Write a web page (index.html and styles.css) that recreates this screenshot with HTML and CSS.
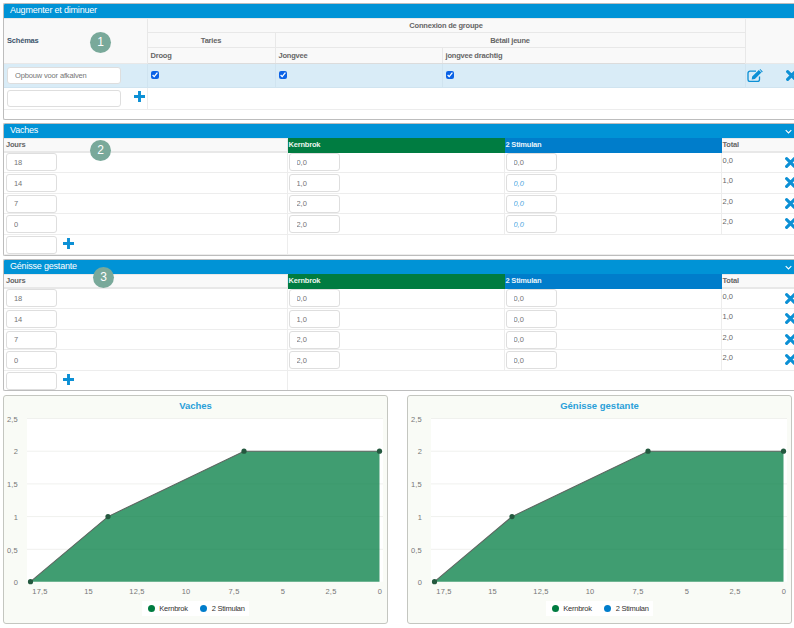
FILE: index.html
```html
<!DOCTYPE html>
<html lang="fr">
<head>
<meta charset="utf-8">
<title>Augmenter et diminuer</title>
<link rel="stylesheet" href="styles.css">
</head>
<body>
<svg class="defs" width="0" height="0" aria-hidden="true">
  <symbol id="i-plus" viewBox="0 0 12 12"><path d="M4.4 0h3.2v4.4H12v3.2H7.6V12H4.4V7.6H0V4.4h4.4z"/></symbol>
  <symbol id="i-x" viewBox="0 0 12 12"><path d="M1.8 1.8l8.4 8.4M10.2 1.8l-8.4 8.4" fill="none" stroke="currentColor" stroke-width="3.4" stroke-linecap="round"/></symbol>
  <symbol id="i-edit" viewBox="0 0 16 13"><path d="M9 2.2H3a2 2 0 0 0-2 2v6.3a2 2 0 0 0 2 2h7.5a2 2 0 0 0 2-2V7.6" fill="none" stroke="currentColor" stroke-width="1.3"/><path d="M5.2 7.4L11.8.9l2.6 2.6-6.5 6.5-3.2.6zM12.6.2l.6-.2 2.6 2.6-.9 1z"/></symbol>
</svg>

<section class="panel panel-schema">
  <h2 class="panel-head">Augmenter et diminuer</h2>
  <span class="badge badge-1">1</span>
  <table class="grid">
    <colgroup><col class="c-s1"><col class="c-s2"><col class="c-s3"><col class="c-s4"><col class="c-s5"></colgroup>
    <thead>
      <tr class="h-a">
        <th rowspan="3" class="th-schema">Schémas</th>
        <th colspan="3" class="center">Connexion de groupe</th>
        <th rowspan="3"></th>
      </tr>
      <tr class="h-b">
        <th class="center">Taries</th>
        <th colspan="2" class="center">Bétail jeune</th>
      </tr>
      <tr class="h-c">
        <th>Droog</th>
        <th>Jongvee</th>
        <th>jongvee drachtig</th>
      </tr>
    </thead>
    <tbody>
      <tr class="row-active">
        <td><input class="field field-wide" type="text" value="Opbouw voor afkalven"></td>
        <td><input class="check" type="checkbox" checked></td>
        <td><input class="check" type="checkbox" checked></td>
        <td><input class="check" type="checkbox" checked></td>
        <td class="actions"><svg class="ic ic-edit"><use href="#i-edit"/></svg><svg class="ic ic-x"><use href="#i-x"/></svg></td>
      </tr>
      <tr class="row-add">
        <td><input class="field field-wide" type="text"><svg class="ic ic-plus ic-plus-s"><use href="#i-plus"/></svg></td>
        <td colspan="4" class="no-inner"></td>
      </tr>
    </tbody>
  </table>
  <div class="panel-foot"></div>
</section>

<section class="panel panel-data panel-2">
  <h2 class="panel-head">Vaches<svg class="chev" viewBox="0 0 10 6"><path d="M1 1l4 4 4-4"/></svg></h2>
  <span class="badge badge-2">2</span>
  <table class="grid">
    <colgroup><col class="c-d1"><col class="c-d2"><col class="c-d3"><col class="c-d4"></colgroup>
    <thead>
      <tr><th>Jours</th><th class="th-green">Kernbrok</th><th class="th-blue">2 Stimulan</th><th>Total</th></tr>
    </thead>
    <tbody>
      <tr><td><input class="field" value="18"></td><td class="cell-n"><input class="field" value="0,0"></td><td class="cell-n"><input class="field" value="0,0"></td><td class="total">0,0<svg class="ic ic-x ic-x-d"><use href="#i-x"/></svg></td></tr>
      <tr><td><input class="field" value="14"></td><td class="cell-n"><input class="field" value="1,0"></td><td class="cell-n"><input class="field" placeholder="0,0"></td><td class="total">1,0<svg class="ic ic-x ic-x-d"><use href="#i-x"/></svg></td></tr>
      <tr><td><input class="field" value="7"></td><td class="cell-n"><input class="field" value="2,0"></td><td class="cell-n"><input class="field" placeholder="0,0"></td><td class="total">2,0<svg class="ic ic-x ic-x-d"><use href="#i-x"/></svg></td></tr>
      <tr><td><input class="field" value="0"></td><td class="cell-n"><input class="field" value="2,0"></td><td class="cell-n"><input class="field" placeholder="0,0"></td><td class="total">2,0<svg class="ic ic-x ic-x-d"><use href="#i-x"/></svg></td></tr>
      <tr class="row-add"><td><input class="field"><svg class="ic ic-plus ic-plus-d"><use href="#i-plus"/></svg></td><td colspan="3" class="no-inner"></td></tr>
    </tbody>
  </table>
</section>

<section class="panel panel-data panel-3">
  <h2 class="panel-head">Génisse gestante<svg class="chev" viewBox="0 0 10 6"><path d="M1 1l4 4 4-4"/></svg></h2>
  <span class="badge badge-3">3</span>
  <table class="grid">
    <colgroup><col class="c-d1"><col class="c-d2"><col class="c-d3"><col class="c-d4"></colgroup>
    <thead>
      <tr><th>Jours</th><th class="th-green">Kernbrok</th><th class="th-blue">2 Stimulan</th><th>Total</th></tr>
    </thead>
    <tbody>
      <tr><td><input class="field" value="18"></td><td class="cell-n"><input class="field" value="0,0"></td><td class="cell-n"><input class="field" value="0,0"></td><td class="total">0,0<svg class="ic ic-x ic-x-d"><use href="#i-x"/></svg></td></tr>
      <tr><td><input class="field" value="14"></td><td class="cell-n"><input class="field" value="1,0"></td><td class="cell-n"><input class="field" value="0,0"></td><td class="total">1,0<svg class="ic ic-x ic-x-d"><use href="#i-x"/></svg></td></tr>
      <tr><td><input class="field" value="7"></td><td class="cell-n"><input class="field" value="2,0"></td><td class="cell-n"><input class="field" value="0,0"></td><td class="total">2,0<svg class="ic ic-x ic-x-d"><use href="#i-x"/></svg></td></tr>
      <tr><td><input class="field" value="0"></td><td class="cell-n"><input class="field" value="2,0"></td><td class="cell-n"><input class="field" value="0,0"></td><td class="total">2,0<svg class="ic ic-x ic-x-d"><use href="#i-x"/></svg></td></tr>
      <tr class="row-add"><td><input class="field"><svg class="ic ic-plus ic-plus-d"><use href="#i-plus"/></svg></td><td colspan="3" class="no-inner"></td></tr>
    </tbody>
  </table>
</section>

<div class="charts">
  <figure class="card">
    <figcaption class="card-title">Vaches</figcaption>
    <svg class="plot" viewBox="0 0 383 186">
      <rect class="plot-bg" x="23" y="3.5" width="356" height="163.2"/>
      <path class="gridline" d="M23 3.5H379M23 36.2H379M23 68.9H379M23 101.6H379M23 134.3H379"/>
      <path class="area" d="M26.5 166.7L104 101.6L240 36.2H375.5V166.7Z"/>
      <path class="line" d="M26.5 166.7L104 101.6L240 36.2H375.5"/>
      <g class="dots"><circle cx="26.5" cy="166.7" r="2.6"/><circle cx="104" cy="101.6" r="2.6"/><circle cx="240" cy="36.2" r="2.6"/><circle cx="375.5" cy="36.2" r="2.6"/></g>
      <g class="y-labels"><text x="14" y="6.5">2,5</text><text x="14" y="39">2</text><text x="14" y="72">1,5</text><text x="14" y="104.5">1</text><text x="14" y="137.5">0,5</text><text x="14" y="169.5">0</text></g>
      <g class="x-labels"><text x="36" y="178.5">17,5</text><text x="84.5" y="178.5">15</text><text x="133" y="178.5">12,5</text><text x="182" y="178.5">10</text><text x="230" y="178.5">7,5</text><text x="279" y="178.5">5</text><text x="327" y="178.5">2,5</text><text x="376" y="178.5">0</text></g>
    </svg>
    <div class="legend"><span class="legend-item"><i class="dot dot-green"></i>Kernbrok</span><span class="legend-item"><i class="dot dot-blue"></i>2 Stimulan</span></div>
  </figure>
  <figure class="card">
    <figcaption class="card-title">Génisse gestante</figcaption>
    <svg class="plot" viewBox="0 0 383 186">
      <rect class="plot-bg" x="23" y="3.5" width="356" height="163.2"/>
      <path class="gridline" d="M23 3.5H379M23 36.2H379M23 68.9H379M23 101.6H379M23 134.3H379"/>
      <path class="area" d="M26.5 166.7L104 101.6L240 36.2H375.5V166.7Z"/>
      <path class="line" d="M26.5 166.7L104 101.6L240 36.2H375.5"/>
      <g class="dots"><circle cx="26.5" cy="166.7" r="2.6"/><circle cx="104" cy="101.6" r="2.6"/><circle cx="240" cy="36.2" r="2.6"/><circle cx="375.5" cy="36.2" r="2.6"/></g>
      <g class="y-labels"><text x="14" y="6.5">2,5</text><text x="14" y="39">2</text><text x="14" y="72">1,5</text><text x="14" y="104.5">1</text><text x="14" y="137.5">0,5</text><text x="14" y="169.5">0</text></g>
      <g class="x-labels"><text x="36" y="178.5">17,5</text><text x="84.5" y="178.5">15</text><text x="133" y="178.5">12,5</text><text x="182" y="178.5">10</text><text x="230" y="178.5">7,5</text><text x="279" y="178.5">5</text><text x="327" y="178.5">2,5</text><text x="376" y="178.5">0</text></g>
    </svg>
    <div class="legend"><span class="legend-item"><i class="dot dot-green"></i>Kernbrok</span><span class="legend-item"><i class="dot dot-blue"></i>2 Stimulan</span></div>
  </figure>
</div>
</body>
</html>
```

FILE: styles.css
```css
* { box-sizing: border-box; }
html, body { margin: 0; height: 628px; width: 794px; overflow: hidden; background: #fff; }
body {
  padding: 3px 0 0 3px;
  font-family: "Liberation Sans", Arial, sans-serif;
  font-size: 8px;
  color: #666;
}
.defs { position: absolute; }

.panel {
  position: relative;
  width: 800px;
  overflow: hidden;
  border: 1px solid #bdbdbd;
  border-width: 1px 0 1px 1px;
  border-radius: 2px 0 0 2px;
  background: #fff;
}
.panel-schema { height: 117px; margin-bottom: 3px; }
.panel-2 { height: 133px; margin-bottom: 3px; }
.panel-3 { height: 132px; margin-bottom: 4px; }

.panel-head {
  position: relative;
  margin: 0;
  height: 13.5px;
  padding-left: 6px;
  background: #0093d6;
  color: #fff;
  font-size: 9px;
  font-weight: 400;
  letter-spacing: -.2px;
  line-height: 13.5px;
}
.chev {
  position: absolute;
  left: 781px;
  top: 4.5px;
  width: 7px;
  height: 5px;
  fill: none;
  stroke: #fff;
  stroke-width: 1.6;
}

.badge {
  position: absolute;
  width: 21px;
  height: 21px;
  border-radius: 50%;
  background: #79a99a;
  color: #fff;
  font-size: 12px;
  line-height: 21px;
  text-align: center;
}
.badge-1 { left: 86px; top: 28px; }
.badge-2 { left: 86px; top: 16px; }
.badge-3 { left: 89px; top: 7px; }

.grid {
  border-collapse: collapse;
  table-layout: fixed;
  width: 796px;
}
.c-s1 { width: 143px; } .c-s2 { width: 128px; } .c-s3 { width: 167px; } .c-s4 { width: 303px; } .c-s5 { width: 55px; }
.c-d1 { width: 283px; } .c-d2 { width: 217px; } .c-d3 { width: 217px; } .c-d4 { width: 79px; }

.grid th {
  padding: 0 3px;
  background: #f9f9f9;
  border: 1px solid #e8e8e8;
  color: #666;
  font-size: 7.5px;
  font-weight: 700;
  letter-spacing: -.2px;
  text-align: left;
}
.grid th.center { text-align: center; }
.grid th.th-schema { color: #3e566c; }
.h-a { height: 14.5px; } .h-b { height: 15px; } .h-c { height: 15.5px; }
.grid thead tr.h-c th { border-bottom: 1px solid #dcdcdc; }

.grid td {
  padding: 0 0 0 2px;
  border: 1px solid #ededed;
  vertical-align: middle;
}
.grid td.cell-n { padding-left: 1px; }
.grid th:first-child, .grid td:first-child { border-left: 0; }
.panel-data thead tr { height: 13.5px; }
.panel-data .grid th { padding: 0 1px; border-bottom: 2px solid #e8e8e8; }
.panel-data .grid th:first-child { padding-left: 2px; }
.panel-data .grid .th-green { background: #007c41; color: #e9f4ee; border-color: #007c41; }
.panel-data .grid .th-blue { background: #007dcb; color: #e6f2fa; border-color: #007dcb; }
.panel-data tbody tr { height: 21px; }
.panel-data tbody tr:nth-child(3) { height: 20px; }
.panel-data tbody tr.row-add { height: 20px; }

.row-active { height: 24px; }
.row-active td { background: #d9ecf7; border-color: #d0e4f0; }
.panel-schema .row-add { height: 22px; }
.row-add td.no-inner { background: #fff; }
.panel-schema td { padding-left: 3px; }
.panel-schema td:first-child { padding-left: 3px; }

.field {
  display: inline-block;
  vertical-align: middle;
  width: 51px;
  height: 18px;
  padding: 0 0 0 7px;
  border: 1px solid #dedede;
  border-radius: 3px;
  background: #fff;
  color: #757575;
  font-family: inherit;
  font-size: 7.5px;
  letter-spacing: -.05px;
  outline: 0;
}
.field::placeholder { color: #4fa6de; font-style: italic; opacity: 1; }
.field-wide { width: 114px; height: 17px; letter-spacing: -.15px; }

.check {
  display: block;
  width: 8px;
  height: 8px;
  margin: 0;
  accent-color: #0a62e6;
}

.ic { display: inline-block; fill: #0c90d5; color: #0c90d5; vertical-align: middle; }
.ic-plus { width: 11px; height: 11px; }
.ic-plus-s { margin-left: 13px; margin-bottom: 4px; }
.ic-plus-d { margin-left: 6px; margin-bottom: 3px; }
.ic-edit { width: 16px; height: 13px; margin-left: -2px; }
.ic-x { width: 11px; height: 11px; }
.actions .ic-x { margin-left: 23px; }
.ic-x-d { position: absolute; left: 781px; }
.total { color: #666; vertical-align: top !important; padding-top: 3px !important; padding-left: 1px !important; font-size: 7.5px; }
.panel-data .total { position: relative; }
.total .ic-x-d { left: 63px; top: 4px; }

.panel-foot { height: 10px; }

.charts { display: flex; gap: 19px; }
.card {
  display: flex;
  flex-direction: column;
  width: 385px;
  height: 229px;
  margin: 0;
  border: 1px solid #c4c6c0;
  border-radius: 3px;
  background: #f9fbf6;
}
.card-title {
  height: 19px;
  color: #2a9fd9;
  font-size: 9.5px;
  font-weight: 700;
  line-height: 19px;
  text-align: center;
}
.plot { display: block; width: 383px; height: 186px; }
.plot-bg { fill: #fff; }
.gridline { fill: none; stroke: #f0f1ee; stroke-width: 1; }
.area { fill: #007c41; fill-opacity: .75; }
.line { fill: none; stroke: #5c6660; stroke-width: 1.1; }
.dots { fill: #24593f; }
.y-labels text { font-size: 7.5px; fill: #777; text-anchor: end; letter-spacing: .2px; }
.x-labels text { font-size: 7.5px; fill: #777; text-anchor: middle; letter-spacing: .2px; }

.legend {
  display: flex;
  align-self: center;
  gap: 12.5px;
  height: 15px;
  padding: 0 4px 0 5.5px;
  background: #fff;
  color: #333;
  font-size: 7.5px;
  letter-spacing: -.25px;
  line-height: 15px;
}
.legend-item { display: flex; align-items: center; gap: 4.5px; }
.dot { display: block; width: 7px; height: 7px; border-radius: 50%; }
.dot-green { background: #007c41; }
.dot-blue { background: #007dcb; }
```
